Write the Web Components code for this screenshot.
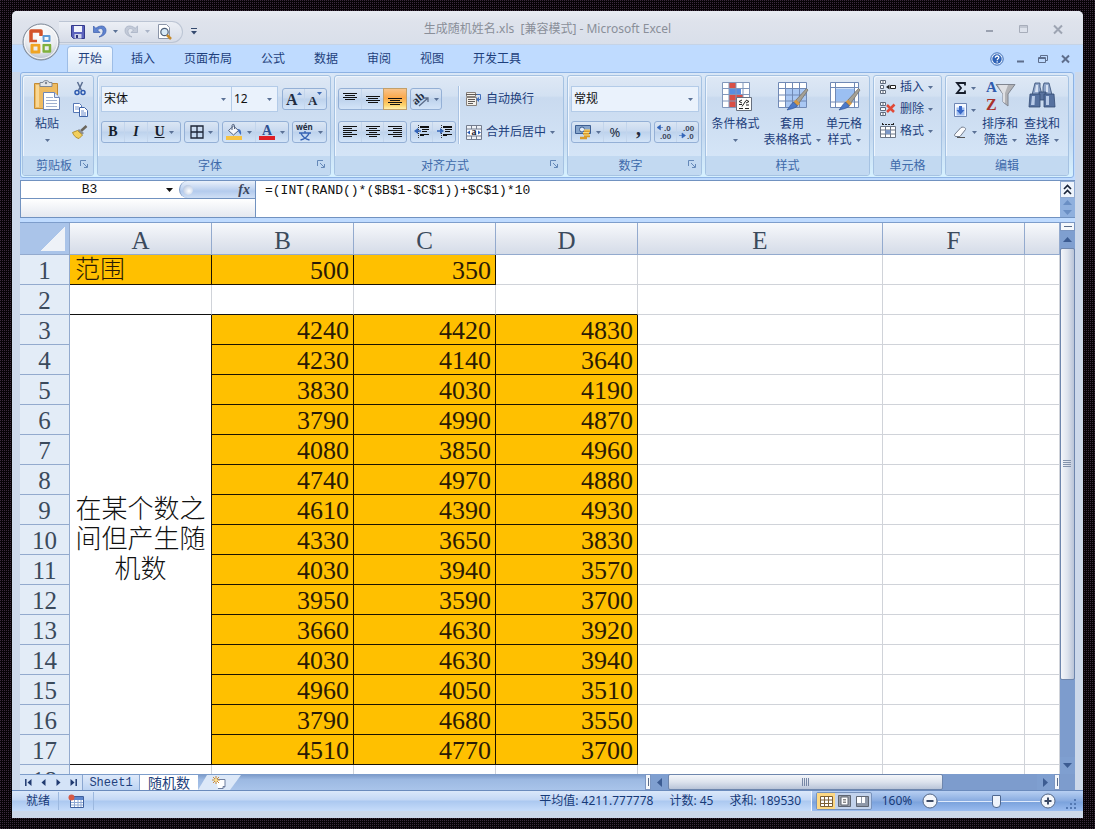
<!DOCTYPE html>
<html lang="zh-CN">
<head>
<meta charset="utf-8">
<title>生成随机姓名.xls - Microsoft Excel</title>
<style>
html, body { height: 100%; margin: 0; }
body {
  box-sizing: border-box; padding: 11px 12px 11px 12px; background-color: #060306;
  background-image: radial-gradient(circle at 0 0, #3c2b3f 0 1px, transparent 1px);
  background-size: 2px 2px; overflow: hidden;
  font: 12px/16px "Noto Sans", "Noto Sans CJK SC", sans-serif; color: #1e3f7c;
}
</style>
</head>
<body>
<xl-app></xl-app>
<script>
const BASE = `
  :host { box-sizing: border-box; }
  *, *::before, *::after { box-sizing: border-box; }
  button, input, select { font: inherit; color: inherit; background: none; border: 0; margin: 0; padding: 0; }
  a { color: inherit; text-decoration: none; }
`;
function component(name, css, html, setup) {
  const tpl = document.createElement('template');
  tpl.innerHTML = `<style>${BASE}${css}</style>${typeof html === 'string' ? html : ''}`;
  customElements.define(name, class extends HTMLElement {
    constructor() {
      super();
      this.attachShadow({ mode: 'open' });
    }
    connectedCallback() {
      if (this.ready) return;
      this.ready = true;
      this.shadowRoot.append(tpl.content.cloneNode(true));
      if (typeof html === 'function') this.shadowRoot.innerHTML += html(this);
      if (setup) setup(this);
    }
  });
}

/* ---------- icons ---------- */
const lines = (rows) => rows.map(([x, y, w]) => `<path d="M${x} ${y + .5}h${w}" stroke="#111" stroke-width="1"/>`).join('');
const ICONS = {
  caret: [5, 3, `<path d="M0 0h5L2.500 3z" fill="#5a7196"/>`],
  caretdim: [5, 3, `<path d="M0 0h5L2.500 3z" fill="#a9b3c6"/>`],
  caretblack: [7, 4, `<path d="M0 0h7L3.500 4z" fill="#111"/>`],
  qatmore: [6, 7, `<path d="M0 .5h6" stroke="#34496e"/><path d="M0 3h6L3 6.500z" fill="#34496e"/>`],
  orb: [38, 38, `<defs><radialGradient id="g" cx=".5" cy=".3" r=".75"><stop offset="0" stop-color="#fff"/><stop offset=".6" stop-color="#e9ebef"/><stop offset="1" stop-color="#a8b2c2"/></radialGradient></defs>
    <circle cx="19" cy="19" r="18" fill="url(#g)" stroke="#7c8796"/><circle cx="19" cy="19" r="16.500" fill="none" stroke="#fff" stroke-width="1" opacity=".8"/>
    <g fill="none" stroke-linejoin="round"><path d="M15 18.500H9V8h10v5" stroke="#d3532a" stroke-width="3.500"/><path d="M21.500 13h6v5h-6z" stroke="#5c9ad6" stroke-width="2"/><path d="M10 22h7v7h-7z" stroke="#f0a422" stroke-width="3"/><path d="M21.500 22h6.500v6.500h-6.500z" stroke="#7fb13c" stroke-width="2.500"/></g>
    <path d="M19.500 15v15M8 20h21" stroke="#f4f4f4" stroke-width="1.500"/>`],
  save: [16, 16, `<path d="M1.500 1.500h13v13h-11l-2-2z" fill="#5b62bd" stroke="#343a8c"/><path d="M4 2h8v6H4z" fill="#f1f3fb"/><path d="M4.500 10h7v4.500h-7z" fill="#cdd2ea"/><path d="M6 11h2v3H6z" fill="#30347c"/>`],
  undo: [15, 15, `<path d="M1.500 2v6.500h6.500L5.500 6c3-2.500 5.500-1.500 5.500 1.500 0 2.500-1.500 4-4 5.500 5-1 7-3.500 7-6.500C14 1.500 8.500.5 3.800 4.300z" fill="#5f83d0" stroke="#3a5cab" stroke-width=".7"/>`],
  redo: [15, 15, `<path d="M13.500 2v6.500H7L9.500 6C6.500 3.500 4 4.500 4 7.500 4 10 5.500 11.500 8 13 3 12 1 9.500 1 6.500 1 1.500 6.500.5 11.200 4.300z" fill="#c3cad8" stroke="#a3adc0" stroke-width=".7"/>`],
  preview: [17, 16, `<path d="M2.500.5h8l3 3v11h-11z" fill="#fff" stroke="#8b95a8"/><circle cx="8.500" cy="8" r="3.700" fill="#d7e9f6" stroke="#4e5f78" stroke-width="1.200"/><path d="M11 11l4 4" stroke="#c68a2a" stroke-width="2.500"/>`],
  winmin: [8, 8, `<path d="M0 6h7" stroke="#9aa1b0" stroke-width="2"/>`],
  winmax: [9, 8, `<path d="M.5.5h8v7h-8zM0 2h9" fill="none" stroke="#a7adba"/>`],
  winclose: [10, 9, `<path d="M1 .5l8 8M9 .5l-8 8" stroke="#9da4b2" stroke-width="2"/>`],
  help: [14, 14, `<circle cx="7" cy="7" r="6.200" fill="#e8f1fc" stroke="#3a6bb5"/><circle cx="7" cy="7" r="4.700" fill="#2f63b7"/><path d="M5.300 5.800C5.300 3.300 9 3.500 8.800 5.700 8.700 6.800 7.200 6.800 7.200 8.200M7.200 9.200v1.300" fill="none" stroke="#fff" stroke-width="1.300"/>`],
  mdimin: [8, 8, `<path d="M0 6.500h7" stroke="#5e6e8c" stroke-width="2"/>`],
  mdirest: [10, 8, `<path d="M2.500 2V.5h7v5H8M.5 2.500h7v5h-7zM.5 3.500h7" fill="none" stroke="#5e6e8c"/>`],
  mdiclose: [9, 8, `<path d="M1 .5l7 7M8 .5l-7 7" stroke="#5e6e8c" stroke-width="2"/>`],
  paste: [28, 31, `<path d="M1.500 3.500h23v25h-23z" fill="#eebb62" stroke="#c48b32"/><path d="M3 5h3v22H3z" fill="#f8d795"/><path d="M7 2.500h3C10 0 16 0 16 2.500h3v4H7z" fill="#e3e6ea" stroke="#7d8796"/><circle cx="13" cy="3" r="1.200" fill="#7d8796"/><path d="M10.500 12.500h11l5 5v12h-16z" fill="#fff" stroke="#6e87b8"/><path d="M21.500 12.500v5h5" fill="#dde6f5" stroke="#6e87b8"/><path d="M13 17.500h7M13 20.500h11M13 23.500h11M13 26.500h11" stroke="#9fb0cf"/>`],
  cut: [12, 15, `<path d="M3.500 1l4 8.500M8.500 1l-4 8.500" stroke="#5b6e91" stroke-width="1.500"/><circle cx="3" cy="11.500" r="2" fill="none" stroke="#2f5bb0" stroke-width="1.500"/><circle cx="9" cy="11.500" r="2" fill="none" stroke="#2f5bb0" stroke-width="1.500"/>`],
  copy: [15, 14, `<path d="M.5.5h6l2 2v7h-8z" fill="#fff" stroke="#5577b5"/><path d="M2 4h4M2 6h4" stroke="#7c9ad0"/><path d="M6.500 4.500h5l3 3v6h-8z" fill="#fff" stroke="#3e63a8"/><path d="M8 8h3M8 10h5M8 12h5" stroke="#6b8ccc"/>`],
  brush: [16, 14, `<path d="M14.500 1L9 6" stroke="#6b665c" stroke-width="2.500"/><path d="M7 4l5 4-2 2-5-4z" fill="#8b8f99"/><path d="M5.500 5.500l5 4.500L7 13.500C4 13 2 11 .5 7.500z" fill="#f2cf5c" stroke="#b3912f"/>`],
  growA: [16, 16, `<text x="0" y="14" font-family="Liberation Serif, serif" font-weight="700" font-size="16" fill="#222c40">A</text><path d="M11 4h5l-2.500-3z" fill="#3865b0"/>`],
  shrinkA: [15, 16, `<text x="0" y="14" font-family="Liberation Serif, serif" font-weight="700" font-size="13" fill="#222c40">A</text><path d="M9 1h5l-2.500 3z" fill="#3865b0"/>`],
  border: [14, 14, `<path d="M1 1h12v12H1zM7 1v12M1 7h12" fill="none" stroke="#1c2536" stroke-width="1.300"/>`],
  fill: [17, 16, `<path d="M2.500 6.500l5-4.500 5 4.500-5 4.500z" fill="#f4f7fc" stroke="#53627e"/><path d="M6 6V1.500C6 0 8.500 0 8.500 1.500V5" fill="none" stroke="#53627e"/><path d="M12 5c3 0 3.500 3 3 6-1.500-1-2-3-3-4z" fill="#416fbd"/><path d="M0 12h16v4H0z" fill="#f6c343"/>`],
  fontcolor: [17, 16, `<text x="3" y="11" font-family="Liberation Serif, serif" font-weight="700" font-size="14" fill="#2d4f90">A</text><path d="M0 12h16v4H0z" fill="#df1f26"/>`],
  wen: [18, 17, `<text x="0" y="6" font-family="Noto Sans, sans-serif" font-weight="700" font-size="8" fill="#222c40">wén</text><path d="M3 9h12M9 7v2M5 9.500c1.500 3 4 5.500 8.500 6.500M13 9.500c-1.500 3-4 5.500-8.500 6.500" fill="none" stroke="#3763b4" stroke-width="1.400"/>`],
  atop: [14, 14, lines([[0,1,14],[2,3,10],[0,5,14],[2,7,10]])],
  amid: [14, 14, lines([[0,4,14],[2,6,10],[0,8,14],[2,10,10]])],
  abot: [14, 14, lines([[0,6,14],[2,8,10],[0,10,14],[2,12,10]])],
  aleft: [14, 14, lines([[0,1,14],[0,3,9],[0,5,14],[0,7,9],[0,9,14],[0,11,9]])],
  acenter: [14, 14, lines([[0,1,14],[3,3,8],[0,5,14],[3,7,8],[0,9,14],[3,11,8]])],
  aright: [14, 14, lines([[0,1,14],[5,3,9],[0,5,14],[5,7,9],[0,9,14],[5,11,9]])],
  orient: [17, 16, `<text x="0" y="11" transform="rotate(-40 6 9)" font-family="Liberation Serif, serif" font-weight="700" font-size="12" fill="#222c40">ab</text><path d="M6 15l9-8M11 7h4v4" fill="none" stroke="#5a6b88" stroke-width="1.300"/>`],
  outdent: [15, 14, lines([[6,1,9],[6,2,9],[8,4,7],[8,6,5],[6,9,9],[6,10,4]]) + `<path d="M4.500 0v14" stroke="#333" stroke-dasharray="1 1"/><path d="M0 6l4-3v6z" fill="#3364b8"/><path d="M3 6h4" stroke="#3364b8" stroke-width="1.500"/>`],
  indent: [15, 14, lines([[6,1,9],[6,2,9],[8,4,7],[8,6,5],[6,9,9],[6,10,4]]) + `<path d="M4.500 0v14" stroke="#333" stroke-dasharray="1 1"/><path d="M7 6L3 3v6z" fill="#3364b8"/><path d="M0 6h4" stroke="#3364b8" stroke-width="1.500"/>`],
  wrap: [16, 16, `<path d="M.5 1.500h9v4h-9zM.5 6.500h10v8h-10z" fill="#f3f0ea" stroke="#87807a"/><path d="M0 3.500h13M2 8.500h7M2 10.500h7M2 12.500h5" stroke="#5f5a58"/><path d="M11 3.500h3.500v5h-3" fill="none" stroke="#416fbd"/><path d="M13 6l-3 2.500 3 2.500z" fill="#416fbd"/>`],
  merge: [16, 15, `<path d="M.5.5h15v14H.5zM.5 4h15M.5 11h15M5.500.5v3.500M10.500.5v3.500M5.500 11v3.500M10.500 11v3.500" fill="#eef2f8" stroke="#747d8e"/><path d="M1 5h14v5H1z" fill="#fff"/><text x="5.500" y="10" font-family="Liberation Serif, serif" font-weight="700" font-size="10" fill="#1c2434">a</text><path d="M1 7.500l3-2v4zM15 7.500l-3-2v4z" fill="#2b5cb4"/>`],
  money: [17, 17, `<path d="M.5 1.500h15v8H.5z" fill="#86a5cc" stroke="#3d5f93"/><circle cx="7" cy="5.500" r="2.500" fill="#e5eefa" stroke="#3d5f93"/><path d="M9 7h6M8 9.500h6M9 12h6M5 14h7" stroke="#d99b2b" stroke-width="2.500"/><path d="M9 6h6M8 8.500h6M9 11h6" stroke="#f8dc85"/>`],
  decinc: [17, 16, `<path d="M0 3.500l3.500-2.500v5zM3 3.500h3" fill="#3364b8" stroke="#3364b8" stroke-width=".6"/><g font-family="Liberation Sans, sans-serif" font-weight="700" font-size="8" fill="#3c4658"><text x="7" y="7">.0</text><text x="3" y="15">.00</text></g>`],
  decdec: [17, 16, `<g font-family="Liberation Sans, sans-serif" font-weight="700" font-size="8" fill="#3c4658"><text x="4" y="7">.00</text><text x="8" y="15">.0</text></g><path d="M6.500 11.500L3 9v5zM0 11.500h3" fill="#3364b8" stroke="#3364b8" stroke-width=".6"/>`],
  condfmt: [32, 32, `<path d="M2.500 2.500h27v25h-27z" fill="#fff"/><path d="M9 2.500h7v6H9zM9 14.500h14v6.500H9zM9 21h7v6.500H9z" fill="#d94f45"/><path d="M9 8.500h12v6H9z" fill="#5a8edf"/><path d="M2.500 2.500h27v25h-27zM2.500 8.500h27M2.500 14.500h27M2.500 21h27M9 2.500v25M16 2.500v25M23 2.500v25" fill="none" stroke="#8197bb"/><path d="M16.500 17.500h15v13h-15z" fill="#fdfdfb" stroke="#67707f"/><path d="M22 20l-3 1.500 3 1.500M19 24.500h3M26 20l3 1.500-3 1.500M26 25h3M22 26.500l4-6M19 28.500h4M25 28.500h4" fill="none" stroke="#222"/>`],
  tablefmt: [32, 32, `<path d="M2.500 2.500h28v25h-28z" fill="#fff"/><path d="M9.500 8.500h21v19h-21z" fill="#a9c7f3"/><path d="M2.500 2.500h28v25h-28zM2.500 8.500h28M2.500 15h28M2.500 21h28M9.500 2.500v25M16.500 2.500v25M23.500 2.500v25" fill="none" stroke="#7089b5"/><path d="M30.500 8.500L20 20l3 3 9-13z" fill="#a5a196" stroke="#6e6a61" stroke-width=".7"/><path d="M20 19.500l4 4-3 3-4-4z" fill="#d69a45"/><path d="M17.500 22l4 4C18 29 14 29 11 30c2-2 3-5 6.500-8z" fill="#4b79c9" stroke="#30549a" stroke-width=".7"/>`],
  cellfmt: [32, 32, `<path d="M2.500 2.500h28v25h-28z" fill="#fff"/><path d="M7.500 8.500h19v13h-19z" fill="#9bbff2"/><path d="M2.500 2.500h28v25h-28zM2.500 7.500h28M2.500 22h28M7.500 2.500v25M26.500 2.500v25" fill="none" stroke="#7089b5"/><path d="M30.500 8.500L20 20l3 3 9-13z" fill="#a5a196" stroke="#6e6a61" stroke-width=".7"/><path d="M20 19.500l4 4-3 3-4-4z" fill="#d69a45"/><path d="M17.500 22l4 4C18 29 14 29 11 30c2-2 3-5 6.500-8z" fill="#4b79c9" stroke="#30549a" stroke-width=".7"/>`],
  cinsert: [16, 14, `<path d="M.5.5h5v3h-5zM.5 10.500h5v3h-5zM3 .5v3M3 10.500v3M.5 5.500h3v3h-3z" fill="#fff" stroke="#5f6a7c"/><path d="M10.500 5.500h5v3h-5z" fill="#fff" stroke="#222"/><path d="M6 7l3.500-2.500v5z" fill="#222"/>`],
  cdelete: [16, 14, `<path d="M.5.5h5v3h-5zM.5 10.500h5v3h-5zM3 .5v3M3 10.500v3M.5 5.500h5v3h-5z" fill="#fff" stroke="#5f6a7c"/><path d="M7 3l7 7M14.500 2.500L7 10" stroke="#e04a38" stroke-width="2.500"/>`],
  cformat: [16, 16, `<path d="M.5 3.500h15v11H.5zM.5 7h15M.5 11h15M5.500 3.500v11M10.500 3.500v11" fill="#fff" stroke="#6b7585"/><path d="M5.500 7h5v4h-5z" fill="#7c98c8"/><path d="M2 1.500h12M2.500 0v3M13.500 0v3" stroke="#222" stroke-dasharray="2 1"/>`],
  sum: [12, 12, `<path d="M10 3.500V1H2l4 5-4 5h8V8.500" fill="none" stroke="#161d2b" stroke-width="1.800"/>`],
  filldown: [13, 14, `<path d="M.5.5h12v13H.5z" fill="#f4f8ff" stroke="#6e86b4"/><path d="M2.500 4.500h8v8h-8z" fill="#9fbdf0"/><path d="M5 3h3v4h2.500l-4 4.500-4-4.500H5z" fill="#3867c6"/>`],
  erase: [15, 13, `<path d="M2 8l6-6.500c1-1 5.500 0 4.500 2L7 10.500H3C1.500 10.500 1 9 2 8z" fill="#f9fafc" stroke="#737d8e"/><path d="M4 11.500h8" stroke="#555"/>`],
  sort: [32, 32, `<path d="M12 4.500h19L24 14v12l-5-4v-8z" fill="#b3b3b6" stroke="#808590"/><path d="M14 5h10l-3 8v10l-2-1v-8z" fill="#dfe0e4"/><g font-family="Liberation Serif, serif" font-weight="700"><text x="2" y="12" font-size="15" fill="#2f5cae">A</text><text x="2" y="30" font-size="16" fill="#a8322c">Z</text></g>`],
  find: [32, 32, `<g stroke="#344b73" stroke-width=".8"><path d="M9 3h5v4l2 8H6l2-8zM18 3h5l1 4 2 8h-9V7z" fill="#8fa5c9"/><path d="M13 12h7v8h-7z" fill="#5a739f"/><path d="M4 14h10v13H3zM18 14h10l1 13H18z" fill="#56719f"/></g><path d="M6 16h3l-.5 9H5zM20 16h3v9h-3z" fill="#b9cbe8"/><path d="M10 5h2v7H9zM20 5h2v7h-2z" fill="#d7e2f3"/>`],
  launcher: [8, 8, `<path d="M.5 6V.5H6" fill="none" stroke="#6488b8"/><path d="M3 3l4 4M7.500 4v3.500H4" fill="none" stroke="#6488b8"/>`],
  chevs: [9, 11, `<path d="M1 5l3.500-3.500L8 5M1 10l3.500-3.500L8 10" fill="none" stroke="#182338" stroke-width="1.600"/>`],
  up: [9, 5, `<path d="M0 5h9L4.500 0z" fill="currentColor"/>`],
  down: [9, 5, `<path d="M0 0h9L4.500 5z" fill="currentColor"/>`],
  left: [5, 9, `<path d="M5 0v9L0 4.500z" fill="currentColor"/>`],
  right: [5, 9, `<path d="M0 0v9l5-4.500z" fill="currentColor"/>`],
  first: [7, 7, `<path d="M.8 0v7" stroke="#203a70" stroke-width="1.500"/><path d="M6.500 0v7L2.500 3.500z" fill="#203a70"/>`],
  prev: [5, 7, `<path d="M4.500 0v7L.5 3.500z" fill="#203a70"/>`],
  next: [5, 7, `<path d="M.5 0v7l4-3.500z" fill="#203a70"/>`],
  last: [7, 7, `<path d="M6.200 0v7" stroke="#203a70" stroke-width="1.500"/><path d="M.5 0v7l4-3.500z" fill="#203a70"/>`],
  newsheet: [16, 13, `<path d="M4 3.500h9v7l-2 2H6" fill="#fff" stroke="#6f7f9e"/><path d="M11 12.500v-2h2" fill="none" stroke="#6f7f9e"/><path d="M4 0v8M0 4h8M1 1l6 6M7 1L1 7" stroke="#c98a35"/><circle cx="4" cy="4" r="1.500" fill="#ffe28a"/>`],
  macro: [16, 14, `<path d="M2.500 2.500h13v11h-13z" fill="#fff" stroke="#3e5f9d"/><path d="M3 3h12v3H3z" fill="#5d86cd"/><path d="M3 8.500h12M3 11h12M6.500 6v7M10 6v7M13 6v7" stroke="#8ea8d4"/><circle cx="3.500" cy="3.500" r="3" fill="#d55845"/>`],
  vnormal: [13, 11, `<path d="M.5.5h12v10H.5zM.5 4h12M.5 7.500h12M4.500.5v10M8.500.5v10" fill="#fff" stroke="#7d5f35"/>`],
  vlayout: [13, 12, `<path d="M.5.5h12v11H.5z" fill="#9a9fa8" stroke="#5f6672"/><path d="M3 2h7v8H3z" fill="#fff" stroke="#5f6672"/><path d="M5 4.500h3M5 6h3M5 7.500h3" stroke="#888"/>`],
  vbreak: [13, 11, `<path d="M.5.5h12v10H.5z" fill="#8f98a8" stroke="#5f6672"/><path d="M1 1h4v6H1zM6 1h3v6H6z" fill="#fff"/>`],
  minus: [16, 16, `<circle cx="8" cy="8" r="7" fill="#f3f6fb" stroke="#536685"/><path d="M4.500 8h7" stroke="#3b4a66" stroke-width="2"/>`],
  plus: [16, 16, `<circle cx="8" cy="8" r="7" fill="#f3f6fb" stroke="#536685"/><path d="M4.500 8h7M8 4.500v7" stroke="#3b4a66" stroke-width="2"/>`],
  grip: [11, 11, `<path d="M8 0h2v2H8zM4 4h2v2H4zM8 4h2v2H8zM0 8h2v2H0zM4 8h2v2H4zM8 8h2v2H8z" fill="#5479b3"/>`],
  gripv: [9, 7, `<path d="M0 .5h8M0 2.500h8M0 4.500h8M0 6.500h8" stroke="#8493ab"/>`],
  griph: [8, 8, `<path d="M.5 0v8M2.500 0v8M4.500 0v8M6.500 0v8" stroke="#7787a5"/>`],
};
component('xl-icon', `:host { display: inline-flex; flex: none; } svg { display: block; overflow: visible; }`, (el) => {
  const [w, h, body] = ICONS[el.getAttribute('name')];
  return `<svg width="${w}" height="${h}" viewBox="0 0 ${w} ${h}" aria-hidden="true">${body}</svg>`;
});

/* ---------- ribbon parts ---------- */
component('xl-tool', `
  :host { display: inline-flex; height: 20px; }
  button { flex: 1; display: flex; align-items: center; justify-content: center; gap: 4px; white-space: nowrap; }
  :host([active]) button { background: linear-gradient(#f8c38a, #fba84a 45%, #fdd36b 80%, #fff0b0); outline: 1px solid #c2a06b; }
`, (el) => `<button type="button" aria-label="${el.getAttribute('label') || el.textContent.trim()}"><slot></slot>${el.hasAttribute('arrow') ? '<xl-icon name="caret"></xl-icon>' : ''}</button>`,
(el) => { if (el.hasAttribute('w')) el.style.width = el.getAttribute('w') + 'px'; });

component('xl-segment', `
  :host { display: inline-flex; flex: none; border: 1px solid #94b0d6; border-radius: 3px; background: linear-gradient(#dbe6f4, #c8d9ef 45%, #bdd2ec 50%, #d3e4f8); }
  ::slotted(xl-tool:not(:last-child)) { border-right: 1px solid #c3d5ec; }
`, `<slot></slot>`);

component('xl-big', `
  :host { display: block; flex: none; }
  button { display: flex; flex-direction: column; align-items: center; width: 100%; white-space: nowrap; line-height: 16px; }
  .pic { height: 36px; display: flex; align-items: flex-start; }
  .second { display: flex; align-items: center; gap: 4px; height: 16px; }
`, (el) => `<button type="button"><span class="pic"><xl-icon name="${el.getAttribute('icon')}"></xl-icon></span><span>${el.getAttribute('top')}</span><span class="second"><slot></slot><xl-icon name="caret"></xl-icon></span></button>`,
(el) => { el.style.width = el.getAttribute('w') + 'px'; });

component('xl-combo', `
  :host { display: grid; align-items: center; height: 26px; background: #eaf2fc; border: 1px solid #b3cbe8; color: #111; }
  select { grid-area: 1 / 1; appearance: none; width: 100%; height: 24px; padding-left: 2px; }
  xl-icon { grid-area: 1 / 1; justify-self: end; margin-right: 5px; pointer-events: none; }
`, (el) => `<select aria-label="${el.getAttribute('label')}"><option>${el.getAttribute('value')}</option></select><xl-icon name="caret"></xl-icon>`);

component('xl-group', `
  :host { display: flex; flex-direction: column; flex: none; border: 1px solid #a5c2e2; border-radius: 3px; background: linear-gradient(#dee8f5, #d3e1f2 20%, #c9daef 22%, #d8e8f9); box-shadow: inset 1px 1px 0 #eef5fd; overflow: hidden; }
  .body { flex: 1; display: flex; padding: 0 3px; min-height: 0; }
  footer { display: flex; align-items: center; height: 19px; background: #c2d9f1; color: #3e6aaa; padding: 1px 5px 0; }
  footer span { flex: 1; text-align: center; }
  footer xl-icon { margin-bottom: 4px; }
`, (el) => `<div class="body"><slot></slot></div><footer><span>${el.getAttribute('caption')}</span>${el.hasAttribute('launch') ? '<xl-icon name="launcher"></xl-icon>' : ''}</footer>`,
(el) => { el.style.width = el.getAttribute('w') + 'px'; });

component('xl-ribbon', `
  :host { display: flex; gap: 3px; flex: none; height: 106px; padding: 2px 1px 1px; margin: 0 1px 0 0; border: 1px solid #8db2e3; border-radius: 3px; background: linear-gradient(#d9e7f7, #c6d9f0 60%, #d6f1ff); overflow: hidden; }
  .rows { display: flex; flex-direction: column; padding-top: 12px; gap: 11px; }
  .rows.tall { padding-top: 10px; gap: 9px; }
  .row { display: flex; gap: 3px; align-items: center; }
  .row.flush { gap: 0; }
  .bigs { display: flex; padding-top: 4px; }
  .stack { display: flex; flex-direction: column; gap: 2px; padding-top: 2px; }
  .stack.cells { gap: 0; padding: 0 0 0 3px; }
  .stack.edit { padding-left: 2px; }
  .sep { width: 1px; margin: 10px 6px 12px 3px; background: #f4f9ff; box-shadow: -1px 0 0 #a9c2e2; }
  .txt xl-tool { height: 22px; align-self: flex-start; }
  .fmt { font: 700 14px/16px "Liberation Serif", serif; color: #161d2b; }
  .i { font-style: italic; } .u { text-decoration: underline; }
  .pct { font: 13px/16px "Noto Sans", sans-serif; color: #222c40; }
  .comma { font: 700 20px/8px "Liberation Serif", serif; color: #222c40; padding-bottom: 8px; }
  .fname { width: 131px; } .fsize { width: 47px; margin-left: -1px; } .nfmt { width: 128px; }
  .after { margin-left: 4px; }
`, `
<xl-group caption="剪贴板" w="72" launch>
  <div class="bigs"><xl-big icon="paste" top="粘贴" w="42"></xl-big></div>
  <div class="stack"><xl-tool w="24" label="剪切"><xl-icon name="cut"></xl-icon></xl-tool><xl-tool w="24" label="复制"><xl-icon name="copy"></xl-icon></xl-tool><xl-tool w="24" label="格式刷"><xl-icon name="brush"></xl-icon></xl-tool></div>
</xl-group>
<xl-group caption="字体" w="234" launch>
  <div class="rows tall">
    <div class="row flush"><xl-combo class="fname" label="字体" value="宋体"></xl-combo><xl-combo class="fsize" label="字号" value="12"></xl-combo>
      <xl-segment class="after"><xl-tool w="22" label="增大字号"><xl-icon name="growA"></xl-icon></xl-tool><xl-tool w="21" label="减小字号"><xl-icon name="shrinkA"></xl-icon></xl-tool></xl-segment></div>
    <div class="row">
      <xl-segment><xl-tool w="23"><span class="fmt">B</span></xl-tool><xl-tool w="23"><span class="fmt i">I</span></xl-tool><xl-tool w="32" arrow><span class="fmt u">U</span></xl-tool></xl-segment>
      <xl-segment><xl-tool w="33" label="边框" arrow><xl-icon name="border"></xl-icon></xl-tool></xl-segment>
      <xl-segment><xl-tool w="33" label="填充颜色" arrow><xl-icon name="fill"></xl-icon></xl-tool><xl-tool w="32" label="字体颜色" arrow><xl-icon name="fontcolor"></xl-icon></xl-tool></xl-segment>
      <xl-segment><xl-tool w="33" label="拼音" arrow><xl-icon name="wen"></xl-icon></xl-tool></xl-segment>
    </div>
  </div>
</xl-group>
<xl-group caption="对齐方式" w="230" launch>
  <div class="rows">
    <div class="row">
      <xl-segment><xl-tool w="23" label="顶端对齐"><xl-icon name="atop"></xl-icon></xl-tool><xl-tool w="22" label="垂直居中"><xl-icon name="amid"></xl-icon></xl-tool><xl-tool w="22" label="底端对齐" active><xl-icon name="abot"></xl-icon></xl-tool></xl-segment>
      <xl-segment><xl-tool w="30" label="方向" arrow><xl-icon name="orient"></xl-icon></xl-tool></xl-segment>
    </div>
    <div class="row">
      <xl-segment><xl-tool w="23" label="左对齐"><xl-icon name="aleft"></xl-icon></xl-tool><xl-tool w="22" label="居中"><xl-icon name="acenter"></xl-icon></xl-tool><xl-tool w="22" label="右对齐"><xl-icon name="aright"></xl-icon></xl-tool></xl-segment>
      <xl-segment><xl-tool w="22" label="减少缩进"><xl-icon name="outdent"></xl-icon></xl-tool><xl-tool w="22" label="增加缩进"><xl-icon name="indent"></xl-icon></xl-tool></xl-segment>
    </div>
  </div>
  <div class="sep"></div>
  <div class="rows txt"><xl-tool><xl-icon name="wrap"></xl-icon>自动换行</xl-tool><xl-tool arrow><xl-icon name="merge"></xl-icon>合并后居中</xl-tool></div>
</xl-group>
<xl-group caption="数字" w="135" launch>
  <div class="rows tall">
    <xl-combo class="nfmt" label="数字格式" value="常规"></xl-combo>
    <div class="row">
      <xl-segment><xl-tool w="32" label="会计数字格式" arrow><xl-icon name="money"></xl-icon></xl-tool><xl-tool w="23"><span class="pct">%</span></xl-tool><xl-tool w="23"><span class="comma">,</span></xl-tool></xl-segment>
      <xl-segment><xl-tool w="22" label="增加小数位数"><xl-icon name="decinc"></xl-icon></xl-tool><xl-tool w="21" label="减少小数位数"><xl-icon name="decdec"></xl-icon></xl-tool></xl-segment>
    </div>
  </div>
</xl-group>
<xl-group caption="样式" w="165">
  <div class="bigs"><xl-big icon="condfmt" top="条件格式" w="53"></xl-big><xl-big icon="tablefmt" top="套用" w="60">表格格式</xl-big><xl-big icon="cellfmt" top="单元格" w="44">样式</xl-big></div>
</xl-group>
<xl-group caption="单元格" w="69">
  <div class="stack cells txt"><xl-tool arrow><xl-icon name="cinsert"></xl-icon>插入</xl-tool><xl-tool arrow><xl-icon name="cdelete"></xl-icon>删除</xl-tool><xl-tool arrow><xl-icon name="cformat"></xl-icon>格式</xl-tool></div>
</xl-group>
<xl-group caption="编辑" w="124">
  <div class="stack edit"><xl-tool w="28" label="求和" arrow><xl-icon name="sum"></xl-icon></xl-tool><xl-tool w="28" label="填充" arrow><xl-icon name="filldown"></xl-icon></xl-tool><xl-tool w="28" label="清除" arrow><xl-icon name="erase"></xl-icon></xl-tool></div>
  <div class="bigs"><xl-big icon="sort" top="排序和" w="42">筛选</xl-big><xl-big icon="find" top="查找和" w="42">选择</xl-big></div>
</xl-group>
`);

/* ---------- title and tabs ---------- */
component('xl-titlebar', `
  :host { display: grid; grid-template-columns: 1fr auto 1fr; align-items: center; flex: none; height: 34px; background: linear-gradient(#e9ecf2, #dfe3ec 30%, #d9dfea); border-bottom: 1px solid #c5d3e6; }
  .orb { position: absolute; left: 22px; top: 23px; z-index: 2; }
  .left { display: flex; align-items: center; gap: 8px; padding: 8px 0 0 47px; }
  .qat { display: flex; align-items: center; gap: 6px; height: 22px; padding: 0 9px 0 11px; border: 1px solid #bcc5d4; border-left: 0; border-radius: 0 11px 11px 0; background: linear-gradient(#eceff5, #d6dce8); }
  h1 { margin: 0; padding-top: 2px; font: inherit; color: #8a8f99; white-space: pre; }
  .win { display: flex; justify-content: flex-end; gap: 25px; padding: 4px 20px 0 0; }
  button { display: flex; }
`, `
<button class="orb" type="button" aria-label="Office 按钮"><xl-icon name="orb"></xl-icon></button>
<div class="left"><div class="qat">
  <button type="button" aria-label="保存"><xl-icon name="save"></xl-icon></button>
  <button type="button" aria-label="撤消"><xl-icon name="undo"></xl-icon></button><xl-icon name="caret"></xl-icon>
  <button type="button" aria-label="恢复"><xl-icon name="redo"></xl-icon></button><xl-icon name="caretdim"></xl-icon>
  <button type="button" aria-label="打印预览"><xl-icon name="preview"></xl-icon></button>
</div><button type="button" aria-label="自定义"><xl-icon name="qatmore"></xl-icon></button></div>
<h1>生成随机姓名.xls  [兼容模式] - Microsoft Excel</h1>
<div class="win"><button type="button" aria-label="最小化"><xl-icon name="winmin"></xl-icon></button><button type="button" aria-label="最大化"><xl-icon name="winmax"></xl-icon></button><button type="button" aria-label="关闭"><xl-icon name="winclose"></xl-icon></button></div>
`);

component('xl-tabs', `
  :host { display: flex; align-items: flex-end; flex: none; height: 27px; padding: 0 13px 0 55px; background: #bfdbff; }
  nav { display: flex; gap: 7px; flex: 1; }
  a { padding: 4px 10px 5px; border: 1px solid transparent; border-bottom: 0; }
  a.on { background: linear-gradient(#f4f9ff, #dce9f8); border-color: #9dbde6; border-radius: 4px 4px 0 0; }
  .mdi { display: flex; align-items: center; gap: 13px; height: 27px; }
  .mdi button { display: flex; }
`, (el) => `<nav>${['开始','插入','页面布局','公式','数据','审阅','视图','开发工具'].map((t, i) => `<a href="#"${i ? '' : ' class="on"'}>${t}</a>`).join('')}</nav>
<div class="mdi">${[['help','帮助'],['mdimin','最小化窗口'],['mdirest','还原窗口'],['mdiclose','关闭窗口']].map(([n, l]) => `<button type="button" aria-label="${l}"><xl-icon name="${n}"></xl-icon></button>`).join('')}</div>`);

/* ---------- formula bar ---------- */
component('xl-formula', `
  :host { display: flex; flex: none; height: 38px; margin: 2px 0 4px; border: 1px solid #7192c0; border-right: 0; background: #fff; }
  .name { width: 235px; flex: none; border-right: 1px solid #7192c0; display: flex; flex-direction: column; }
  .top { display: flex; align-items: center; height: 18px; border-bottom: 1px solid #7192c0; }
  .name input { flex: 1; min-width: 0; padding-right: 8px; text-align: center; font: 13px/16px "Liberation Mono", monospace; color: #111; height: 17px; }
  .pill { display: flex; align-items: center; justify-content: space-between; width: 76px; height: 17px; margin-left: 6px; padding: 0 5px 0 3px; border-radius: 9px 0 0 9px; border-left: 1px solid #7f9bc4; background: linear-gradient(#eaf1fb, #b4cbed 60%, #cfdff5); }
  .knob { width: 10px; height: 10px; border-radius: 50%; background: radial-gradient(circle at 60% 60%, #fff, #a4b8d8); }
  .fx { font: italic 700 14px/14px "Liberation Serif", serif; color: #3a455b; }
  .rest { flex: 1; background: linear-gradient(#fff, #e4e8f0); }
  .text { flex: 1; min-width: 0; height: 18px; margin-top: 1px; padding-left: 9px; font: 13px/18px "Liberation Mono", monospace; color: #111; }
  .side { width: 15px; display: flex; flex-direction: column; background: #8fb0de; color: #6a8fc4; }
  .side button { display: flex; justify-content: center; align-items: center; flex: 1; }
  .side .exp { flex: none; height: 17px; background: #eef4fc; border: 1px solid #8fa9d0; }
`, `
<div class="name"><div class="top"><input value="B3" aria-label="名称框"><xl-icon name="caretblack"></xl-icon><div class="pill"><span class="knob"></span><span class="fx">fx</span></div></div><div class="rest"></div></div>
<input class="text" aria-label="编辑栏" value="=(INT(RAND()*($B$1-$C$1))+$C$1)*10">
<div class="side"><button class="exp" type="button" aria-label="展开编辑栏"><xl-icon name="chevs"></xl-icon></button><button type="button" aria-label="上一行"><xl-icon name="up"></xl-icon></button><button type="button" aria-label="下一行"><xl-icon name="down"></xl-icon></button></div>
`);

/* ---------- worksheet ---------- */
const DATA = [
  [4240,4420,4830],[4230,4140,3640],[3830,4030,4190],[3790,4990,4870],[4080,3850,4960],
  [4740,4970,4880],[4610,4390,4930],[4330,3650,3830],[4030,3940,3570],[3950,3590,3700],
  [3660,4630,3920],[4030,4630,3940],[4960,4050,3510],[3790,4680,3550],[4510,4770,3700]];
component('xl-sheet', `
  :host { display: block; min-width: 0; min-height: 0; overflow: hidden; background: #fff; border-top: 1px solid #7d9dcb; }
  table { width: 100%; table-layout: fixed; border-spacing: 0; font: 26px/27px "Liberation Serif", "Noto Sans CJK SC", serif; color: #2a1a05; }
  .h { width: 50px; } .c { width: 142px; } .e { width: 245px; }
  th, td { padding: 2px 0 0; height: 30px; border-right: 1px solid #d0d3d9; border-bottom: 1px solid #d0d3d9; white-space: nowrap; }
  th { font-weight: 400; font-size: 25px; color: #3b4a5c; }
  thead th { height: 32px; border-color: #93aace; background: linear-gradient(#f7f9fc, #e4e8f0 55%, #d5dce8); padding-top: 3px; }
  thead th:first-child { background: linear-gradient(135deg, transparent 50%, #eef2f8 50%) right 4px bottom 3px / 24px 24px no-repeat, #aac4e9; }
  tbody th { background: #e3ecf7; border-color: #93aace; }
  .o { background: #ffc000; border-color: #1a1200; text-align: right; padding-right: 4px; }
  .t { text-align: left; padding: 0 0 0 5px; }
  .ul { border-bottom-color: #111; }
  .m { white-space: normal; text-align: center; vertical-align: middle; line-height: 30px; color: #111; border-color: #111; padding: 0 4px; font-weight: 300; }
  .t { font-size: 25px; font-weight: 300; }
`, () => {
  const blank = '<td></td><td></td><td></td>';
  const rows = DATA.map((r, i) => `<tr><th scope="row">${i + 3}</th>${i ? '' : `<td class="m" rowspan="${DATA.length}">在某个数之间但产生随机数</td>`}${r.map((v) => `<td class="o">${v}</td>`).join('')}${blank}</tr>`).join('');
  return `<table><colgroup><col class="h"><col class="c"><col class="c"><col class="c"><col class="c"><col class="e"><col class="c"><col></colgroup>
<thead><tr><th aria-label="全选"></th>${['A','B','C','D','E','F',''].map((c) => `<th scope="col">${c}</th>`).join('')}</tr></thead>
<tbody><tr><th scope="row">1</th><td class="o t">范围</td><td class="o">500</td><td class="o">350</td><td></td>${blank}</tr>
<tr><th scope="row">2</th><td class="ul"></td><td class="ul"></td><td class="ul"></td><td class="ul"></td>${blank}</tr>${rows}
<tr><th scope="row">18</th><td></td><td></td><td></td><td></td>${blank}</tr></tbody></table>`;
});

component('xl-scroll', `
  :host { display: flex; flex-direction: column; color: #3c5c92; background: #7f9fd0; min-width: 0; min-height: 0; }
  :host([dir-x]) { flex-direction: row; }
  .split { flex: 0 0 9px; background: #f5f8fc; border: 1px solid #7b96c2; display: flex; align-items: center; justify-content: center; }
  .split::after { content: ""; width: 8px; height: 1px; background: #5a6c8a; }
  :host([dir-x]) .split { flex-basis: 6px; }
  :host([dir-x]) .split::after { width: 1px; height: 8px; }
  button { flex: 0 0 17px; display: flex; align-items: center; justify-content: center; }
  .thumb { flex: 433 1 0; display: flex; align-items: center; justify-content: center; border: 1px solid #6e86ad; border-radius: 2px; background: linear-gradient(90deg, #f4f6fa, #dde3ed 50%, #b9c4d8); }
  .track { flex: 78 1 0; background: #7d9ccd; }
  :host([dir-x]) .thumb { flex-grow: 273; background: linear-gradient(#f4f6fa, #dde3ed 50%, #b9c4d8); }
  :host([dir-x]) .track { flex-grow: 94; }
`, (el) => {
  const x = el.hasAttribute('dir-x');
  return `<span class="split"></span><button type="button" aria-label="${x ? '向左' : '向上'}"><xl-icon name="${x ? 'left' : 'up'}"></xl-icon></button><div class="thumb"><xl-icon name="${x ? 'griph' : 'gripv'}"></xl-icon></div><div class="track"></div><button type="button" aria-label="${x ? '向右' : '向下'}"><xl-icon name="${x ? 'right' : 'down'}"></xl-icon></button>${x ? '<span class="split"></span>' : ''}`;
});

component('xl-sheettabs', `
  :host { display: flex; height: 16px; min-width: 0; background: linear-gradient(#7f9dcb, #9cb9e2 30%, #a9c4ea); border-top: 1px solid #7d9dcb; }
  .nav { display: flex; align-items: center; justify-content: space-around; width: 62px; background: #d4e3f7; }
  .nav button { display: flex; }
  a { display: flex; align-items: center; white-space: nowrap; background: linear-gradient(#dfeafa, #bcd3f3); border: solid #8aa6d0; border-width: 0 1px; }
  .s1 { width: 58px; justify-content: center; padding-top: 2px; font: 12px/13px "Liberation Mono", monospace; }
  .s2 { width: 58px; justify-content: center; background: #fff; border: 0; font-size: 14px; line-height: 15px; }
  .new { display: flex; align-items: center; justify-content: center; width: 43px; background: #dce8f8; clip-path: polygon(9px 0, 100% 0, 32px 100%, 0 100%); }
`, `
<div class="nav"><button type="button" aria-label="第一张"><xl-icon name="first"></xl-icon></button><button type="button" aria-label="上一张"><xl-icon name="prev"></xl-icon></button><button type="button" aria-label="下一张"><xl-icon name="next"></xl-icon></button><button type="button" aria-label="最后一张"><xl-icon name="last"></xl-icon></button></div>
<a class="s1" href="#">Sheet1</a><a class="s2" href="#">随机数</a><button class="new" type="button" aria-label="插入工作表"><xl-icon name="newsheet"></xl-icon></button>
`);

/* ---------- status bar ---------- */
component('xl-status', `
  :host { display: flex; align-items: center; flex: none; height: 21px; border-top: 1px solid #6b8bbd; background: linear-gradient(#dbe8fa, #c3d7f5 45%, #abc8f0 50%, #c6dcfa); color: #173a78; white-space: nowrap; }
  .mode { padding: 0 8px 0 14px; }
  .macro { display: flex; align-items: center; height: 18px; padding: 0 9px; border: solid #9cb8df; border-width: 0 1px; }
  .sums { flex: 1; display: flex; justify-content: flex-end; gap: 16px; padding-right: 10px; }
  .zoom { display: flex; align-items: center; height: 20px; padding: 0 6px 0 4px; border-left: 1px solid #f2f7ff; background: linear-gradient(#b7cff2, #88abe0 50%, #7ba2dc 55%, #9abcf0); }
  .views { display: flex; height: 18px; border: 1px solid #7892bb; background: #c3d3ec; border-radius: 2px; }
  .views button { width: 18px; display: flex; align-items: center; justify-content: center; }
  .views button:first-child { background: #fdd883; }
  .pct { width: 50px; text-align: center; }
  .round { display: flex; }
  input { appearance: none; width: 102px; height: 16px; margin: 0; background: linear-gradient(#dfeafb, #dfeafb) center / 100% 1px no-repeat; }
  input::-webkit-slider-thumb { appearance: none; width: 9px; height: 13px; background: #eef3fb; border: 1px solid #4f6890; border-radius: 1px 1px 4px 4px; }
  .grip { margin: 6px 0 0 10px; }
`, `
<span class="mode">就绪</span><button class="macro" type="button" aria-label="录制宏"><xl-icon name="macro"></xl-icon></button>
<div class="sums"><span>平均值: 4211.777778</span><span>计数: 45</span><span>求和: 189530</span></div>
<div class="zoom"><div class="views"><button type="button" aria-label="普通"><xl-icon name="vnormal"></xl-icon></button><button type="button" aria-label="页面布局"><xl-icon name="vlayout"></xl-icon></button><button type="button" aria-label="分页预览"><xl-icon name="vbreak"></xl-icon></button></div>
<span class="pct">160%</span><button class="round" type="button" aria-label="缩小"><xl-icon name="minus"></xl-icon></button><input type="range" min="0" max="100" value="58" aria-label="显示比例"><button class="round" type="button" aria-label="放大"><xl-icon name="plus"></xl-icon></button><xl-icon class="grip" name="grip"></xl-icon></div>
`);

component('xl-app', `
  :host { display: flex; flex-direction: column; height: 100%; border-radius: 5px 5px 0 0; overflow: hidden; background: #ccd8ea; padding-bottom: 7px; }
  main { flex: 1; min-height: 0; display: flex; flex-direction: column; margin: 0 8px; background: #bfdbff; }
  .work { flex: 1; min-height: 0; display: grid; grid-template: minmax(0, 1fr) / minmax(0, 1fr) 15px; }
  .bottom { flex: none; display: grid; grid-template-columns: 625fr 415fr 15px; background: #7d9ccd; }
`, `
<xl-titlebar></xl-titlebar>
<xl-tabs></xl-tabs>
<main>
  <xl-ribbon></xl-ribbon>
  <xl-formula></xl-formula>
  <div class="work"><xl-sheet></xl-sheet><xl-scroll></xl-scroll></div>
  <div class="bottom"><xl-sheettabs></xl-sheettabs><xl-scroll dir-x></xl-scroll></div>
</main>
<xl-status></xl-status>
`);
</script>
</body>
</html>
